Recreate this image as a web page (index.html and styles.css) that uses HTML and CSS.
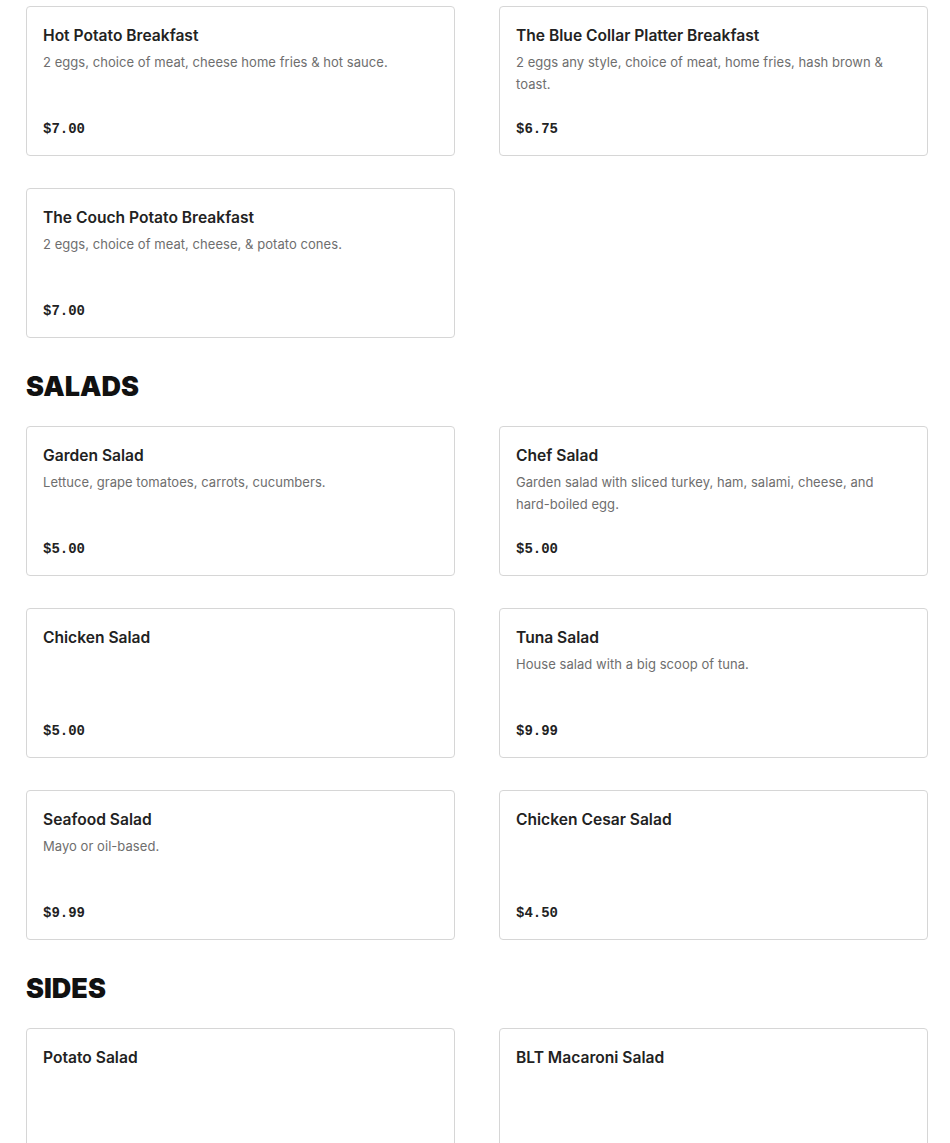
FILE: index.html
```html
<!DOCTYPE html>
<html>
<head>
<meta charset="utf-8">
<link rel="stylesheet" href="styles.css">
</head>
<body>
<main class="menu">
  <section class="section">
    <div class="grid">
      <div class="card"><div class="name">Hot Potato Breakfast</div><div class="desc">2 eggs, choice of meat, cheese home fries &amp; hot sauce.</div><div class="price">$7.00</div></div>
      <div class="card"><div class="name">The Blue Collar Platter Breakfast</div><div class="desc">2 eggs any style, choice of meat, home fries, hash brown &amp; toast.</div><div class="price">$6.75</div></div>
      <div class="card"><div class="name">The Couch Potato Breakfast</div><div class="desc">2 eggs, choice of meat, cheese, &amp; potato cones.</div><div class="price">$7.00</div></div>
    </div>
  </section>
  <section class="section">
    <h2 class="heading">SALADS</h2>
    <div class="grid">
      <div class="card"><div class="name">Garden Salad</div><div class="desc">Lettuce, grape tomatoes, carrots, cucumbers.</div><div class="price">$5.00</div></div>
      <div class="card"><div class="name">Chef Salad</div><div class="desc">Garden salad with sliced turkey, ham, salami, cheese, and <span class="nowrap">hard-boiled</span> egg.</div><div class="price">$5.00</div></div>
      <div class="card"><div class="name">Chicken Salad</div><div class="price">$5.00</div></div>
      <div class="card"><div class="name">Tuna Salad</div><div class="desc">House salad with a big scoop of tuna.</div><div class="price">$9.99</div></div>
      <div class="card"><div class="name">Seafood Salad</div><div class="desc">Mayo or oil-based.</div><div class="price">$9.99</div></div>
      <div class="card"><div class="name">Chicken Cesar Salad</div><div class="price">$4.50</div></div>
    </div>
  </section>
  <section class="section">
    <h2 class="heading">SIDES</h2>
    <div class="grid">
      <div class="card"><div class="name">Potato Salad</div><div class="price">$3.50</div></div>
      <div class="card"><div class="name">BLT Macaroni Salad</div><div class="price">$3.50</div></div>
    </div>
  </section>
</main>
</body>
</html>
```
FILE: styles.css
```css
* { box-sizing: border-box; }
body {
  margin: 0;
  background: #fff;
  font-family: "Inter", "Liberation Sans", sans-serif;
  color: #222;
}
.menu {
  width: 902px;
  margin-left: 26px;
  padding-top: 6px;
}
.heading {
  margin: 32px 0 22px;
  font-family: "Inter", sans-serif;
  font-weight: 900;
  font-size: 27px;
  line-height: 34px;
  color: #111;
}
.grid {
  display: grid;
  grid-template-columns: 1fr 1fr;
  column-gap: 44px;
  row-gap: 32px;
}
.card {
  border: 1px solid #d6d6d6;
  border-radius: 4px;
  min-height: 150px;
  padding: 17px 16px 16px;
  display: flex;
  flex-direction: column;
}
.name {
  font-size: 15.6px;
  font-weight: 600;
  line-height: 24px;
  color: #222;
}
.desc {
  margin-top: 3px;
  font-size: 13px;
  letter-spacing: 0.05px;
  line-height: 22px;
  color: #6e6e6e;
}
.nowrap { white-space: nowrap; }
.price {
  margin-top: auto;
  padding-top: 12px;
  font-family: "Liberation Mono", monospace;
  font-weight: 700;
  font-size: 14px;
  line-height: 20px;
  color: #222;
}
```
